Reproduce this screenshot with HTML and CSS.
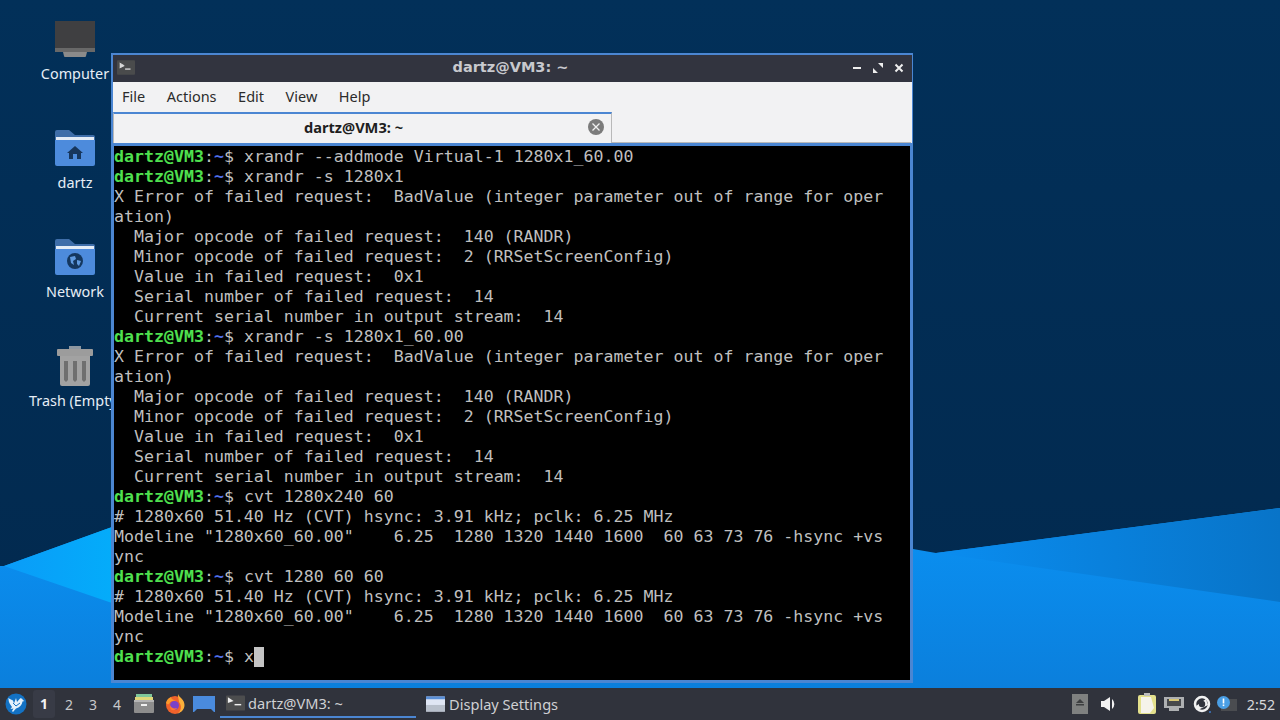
FILE: index.html
```html
<!DOCTYPE html>
<html lang="en">
<head>
<meta charset="utf-8">
<title>dartz@VM3: ~</title>
<link rel="stylesheet" href="styles.css">
</head>
<body>
<main class="desktop">
  <svg class="wallpaper" viewBox="0 0 1280 688" preserveAspectRatio="none" aria-hidden="true">
    <defs>
      <linearGradient id="sky" x1="0" y1="0" x2="0" y2="1">
        <stop offset="0" stop-color="#023059"/>
        <stop offset="1" stop-color="#02294e"/>
      </linearGradient>
      <linearGradient id="lower" x1="0" y1="0" x2="0" y2="1">
        <stop offset="0" stop-color="#0a92f4"/>
        <stop offset="1" stop-color="#0b7fdc"/>
      </linearGradient>
      <linearGradient id="rightPanel" x1="0" y1="0" x2="1" y2="0">
        <stop offset="0" stop-color="#0a8df0"/>
        <stop offset="1" stop-color="#0874c8"/>
      </linearGradient>
      <linearGradient id="leftPanel" x1="0" y1="0" x2="1" y2="0">
        <stop offset="0" stop-color="#0a9cf8"/>
        <stop offset="1" stop-color="#04acfa"/>
      </linearGradient>
    </defs>
    <rect width="1280" height="688" fill="url(#sky)"/>
    <polygon points="0,688 0,566 4,566 112,527 913,549 936,553 1280,508 1280,688" fill="url(#lower)"/>
    <polygon points="936,553 1280,508 1280,602" fill="url(#rightPanel)"/>
    <polygon points="4,566 112,527 112,603" fill="url(#leftPanel)"/>
  </svg>

  <nav class="icons">
    <a class="desk-icon">
      <svg class="desk-glyph" viewBox="0 0 40 40">
        <rect x="0" y="2" width="40" height="27" fill="#3f3f41"/>
        <rect x="0" y="29" width="40" height="4" fill="#686868"/>
        <path d="M8 33h24l-1 4a1 1 0 0 1-1 1H10a1 1 0 0 1-1-1z" fill="#8a8a8a"/>
      </svg>
      <span>Computer</span>
    </a>
    <a class="desk-icon">
      <svg class="desk-glyph" viewBox="0 0 40 40">
        <path d="M0 4a2 2 0 0 1 2-2h12l6 5h18a2 2 0 0 1 2 2v6H0z" fill="#3f6ea9"/>
        <rect x="1" y="9" width="38" height="3" fill="#e4ecf6"/>
        <path d="M0 12h40v24a2 2 0 0 1-2 2H2a2 2 0 0 1-2-2z" fill="#4d8bdc"/>
        <path d="M20 18l8 7h-2v6h-4v-5h-4v5h-4v-6h-2z" fill="#17365c"/>
      </svg>
      <span>dartz</span>
    </a>
    <a class="desk-icon">
      <svg class="desk-glyph" viewBox="0 0 40 40">
        <path d="M0 4a2 2 0 0 1 2-2h12l6 5h18a2 2 0 0 1 2 2v6H0z" fill="#3f6ea9"/>
        <rect x="1" y="9" width="38" height="3" fill="#e4ecf6"/>
        <path d="M0 12h40v24a2 2 0 0 1-2 2H2a2 2 0 0 1-2-2z" fill="#4d8bdc"/>
        <circle cx="20" cy="24" r="8" fill="#14375f"/>
        <path d="M15 20l5-1 1 3-3 2 1 4-3-2zM22 23l4 1-2 5-2-2z" fill="#5f9ae0"/>
      </svg>
      <span>Network</span>
    </a>
    <a class="desk-icon">
      <svg class="desk-glyph" viewBox="0 0 40 40">
        <rect x="14" y="0" width="12" height="3" fill="#8d97a1"/>
        <rect x="2" y="3" width="36" height="7" rx="1" fill="#9c9c9c"/>
        <path d="M5 10h30v28a2 2 0 0 1-2 2H7a2 2 0 0 1-2-2z" fill="#a2a2a2"/>
        <path d="M9 15h4v19l-2 2-2-2zM18 15h4v19l-2 2-2-2zM27 15h4v19l-2 2-2-2z" fill="#6f6f6f"/>
      </svg>
      <span>Trash (Empty)</span>
    </a>
  </nav>

  <section class="window">
    <header class="titlebar">
      <svg class="term-icon" viewBox="0 0 20 16">
        <rect width="20" height="16" rx="1" fill="#4a4b4c"/>
        <path d="M3 3l5 3-5 2.500" fill="#d8d8d8" stroke="#d8d8d8"/>
        <rect x="9" y="9" width="6" height="1.500" fill="#d8d8d8"/>
      </svg>
      <h1 class="title">dartz@VM3: ~</h1>
      <div class="controls">
        <svg viewBox="0 0 10 10"><rect x="1" y="4" width="8" height="2" fill="#eee"/></svg>
        <svg viewBox="0 0 10 10"><path d="M5 0h5v5zM0 5l5 5H0z" fill="#eee"/></svg>
        <svg viewBox="0 0 10 10"><path d="M1.500 1.500l7 7M8.500 1.500l-7 7" stroke="#eee" stroke-width="2"/></svg>
      </div>
    </header>
    <nav class="menubar">
      <span>File</span><span>Actions</span><span>Edit</span><span>View</span><span>Help</span>
    </nav>
    <div class="tabbar">
      <div class="tab">
        <span class="tab-label">dartz@VM3: ~</span>
        <svg class="tab-close" viewBox="0 0 16 16">
          <circle cx="8" cy="8" r="8" fill="#7b7b7b"/>
          <path d="M4.500 4.500l7 7M11.500 4.500l-7 7" stroke="#f0f0f0" stroke-width="1.300"/>
        </svg>
      </div>
    </div>
    <div class="terminal">
<div class="line"><b class="u">dartz@VM3</b>:<b class="h">~</b>$ xrandr --addmode Virtual-1 1280x1_60.00</div>
<div class="line"><b class="u">dartz@VM3</b>:<b class="h">~</b>$ xrandr -s 1280x1</div>
<div class="line">X Error of failed request:  BadValue (integer parameter out of range for oper</div>
<div class="line">ation)</div>
<div class="line">  Major opcode of failed request:  140 (RANDR)</div>
<div class="line">  Minor opcode of failed request:  2 (RRSetScreenConfig)</div>
<div class="line">  Value in failed request:  0x1</div>
<div class="line">  Serial number of failed request:  14</div>
<div class="line">  Current serial number in output stream:  14</div>
<div class="line"><b class="u">dartz@VM3</b>:<b class="h">~</b>$ xrandr -s 1280x1_60.00</div>
<div class="line">X Error of failed request:  BadValue (integer parameter out of range for oper</div>
<div class="line">ation)</div>
<div class="line">  Major opcode of failed request:  140 (RANDR)</div>
<div class="line">  Minor opcode of failed request:  2 (RRSetScreenConfig)</div>
<div class="line">  Value in failed request:  0x1</div>
<div class="line">  Serial number of failed request:  14</div>
<div class="line">  Current serial number in output stream:  14</div>
<div class="line"><b class="u">dartz@VM3</b>:<b class="h">~</b>$ cvt 1280x240 60</div>
<div class="line"># 1280x60 51.40 Hz (CVT) hsync: 3.91 kHz; pclk: 6.25 MHz</div>
<div class="line">Modeline "1280x60_60.00"    6.25  1280 1320 1440 1600  60 63 73 76 -hsync +vs</div>
<div class="line">ync</div>
<div class="line"><b class="u">dartz@VM3</b>:<b class="h">~</b>$ cvt 1280 60 60</div>
<div class="line"># 1280x60 51.40 Hz (CVT) hsync: 3.91 kHz; pclk: 6.25 MHz</div>
<div class="line">Modeline "1280x60_60.00"    6.25  1280 1320 1440 1600  60 63 73 76 -hsync +vs</div>
<div class="line">ync</div>
<div class="line"><b class="u">dartz@VM3</b>:<b class="h">~</b>$ x<i class="cursor"></i></div>
    </div>
  </section>
</main>

<footer class="taskbar">
  <svg class="start" viewBox="0 0 22 22">
    <circle cx="11" cy="11" r="10.500" fill="#1372c4"/>
    <path d="M3 5l5 2.500 1 3 2-5.500 1 4 3-3.500c1.500-.5 2.500.5 2.800 1.500l1.700 1-2 .5c-.5 3.500-3 6-6.500 7l-3 3.500-1-1 1.500-2.500-3 .5 1.500-2c-2-2.500-3.500-5-3.500-8z" fill="#e4f1fb"/>
    <path d="M8 10l3 3 4-3" fill="none" stroke="#1372c4" stroke-width="1"/>
  </svg>
  <div class="pager">
    <span class="active">1</span><span>2</span><span>3</span><span>4</span>
  </div>
  <div class="launchers">
    <svg viewBox="0 0 20 20">
      <rect x="2" y="0" width="16" height="3" fill="#7fc79a"/>
      <rect x="1" y="3" width="18" height="3" fill="#e0d77a"/>
      <path d="M0 7h20v11a1 1 0 0 1-1 1H1a1 1 0 0 1-1-1z" fill="#8d8d8d"/>
      <rect x="0" y="6" width="20" height="2" fill="#b5b5b5"/>
      <rect x="7" y="10" width="6" height="2" fill="#f0f0f0"/>
    </svg>
    <svg viewBox="0 0 20 20">
      <circle cx="10" cy="11" r="9" fill="#f0622b"/>
      <path d="M13 0c.5 3 6.500 5 6.500 11 0 4-3 7.500-7 8.500 4-2.500 4.500-8 1.500-11.500 0-3-1.500-5-1-8z" fill="#fbb03b"/>
      <path d="M1 9c.5-3 2.500-5 5-6 0 2 2 3 5 3.500-4 0-6 1-7 3.500-1 .5-2 .5-3-1z" fill="#fa9a2c"/>
      <circle cx="9.500" cy="11.500" r="4.500" fill="#7a42c8"/>
      <path d="M5 11c1 3 4 4 7 3-1 2-4 3-6 1.500-1-1-1-3-1-4.500z" fill="#ff7a2e"/>
    </svg>
    <svg class="wide" viewBox="0 0 22 16">
      <path d="M0 0h22v16h-1l-3-3H4l-3 3H0z" fill="#4a8bdd"/>
    </svg>
  </div>
  <div class="task current">
    <svg viewBox="0 0 20 16">
      <rect width="20" height="16" rx="1" fill="#4c4d4e"/>
      <path d="M2 2l6 4-6 2" fill="#eee"/>
      <rect x="9" y="9" width="7" height="1.500" fill="#eee"/>
    </svg>
    <span>dartz@VM3: ~</span>
  </div>
  <div class="task">
    <svg viewBox="0 0 20 16">
      <rect width="20" height="16" rx="1" fill="#dfe6f4"/>
      <rect width="20" height="3" fill="#5a8fd6"/>
      <rect y="9" width="20" height="7" fill="#b8c0cc"/>
    </svg>
    <span>Display Settings</span>
  </div>
  <div class="tray">
    <svg class="t-eject" viewBox="0 0 16 20">
      <rect width="16" height="20" fill="#7f8180"/>
      <path d="M8 5l4 4H4z" fill="#3d3f40"/>
      <rect x="4" y="10" width="8" height="1.500" fill="#3d3f40"/>
    </svg>
    <svg class="t-vol" viewBox="0 0 18 18">
      <path d="M1 6h3l6-4v14l-6-4H1z" fill="#f2f2f2"/>
      <path d="M12 4a6.500 6.500 0 0 1 0 10z" fill="#f2f2f2"/>
    </svg>
    <svg class="t-note" viewBox="0 0 20 22">
      <rect x="1" y="2" width="18" height="19" rx="2" fill="#e3e08c"/>
      <rect x="7" y="0" width="6" height="3" fill="#bdbdbd"/>
      <path d="M4 4h10l3 11-4 5H4z" fill="#f5f3ea"/>
    </svg>
    <svg class="t-net" viewBox="0 0 20 16">
      <path d="M0 1h20v11h-5v3H5v-3H0z" fill="#aeb0b2"/>
      <rect x="3" y="3" width="14" height="7" fill="#47494c"/>
      <path d="M5 3h10v2H5z" fill="#d8c777"/>
    </svg>
    <svg class="t-sync" viewBox="0 0 18 18">
      <circle cx="9" cy="9" r="7" fill="none" stroke="#f2f2f2" stroke-width="2.500"/>
      <path d="M3 11l10-7 2 6-10 5z" fill="#f2f2f2"/>
      <circle cx="9" cy="9" r="3.200" fill="#30333c"/>
      <circle cx="17" cy="17" r="1" fill="#3d78c4"/>
    </svg>
    <svg class="t-bell" viewBox="0 0 20 16">
      <rect x="4" y="3" width="16" height="12" fill="#4a4c50"/>
      <circle cx="6.500" cy="6.500" r="6.500" fill="#4a9fe6"/>
      <rect x="5.700" y="2.500" width="1.600" height="5" fill="#fff"/>
      <rect x="5.700" y="8.500" width="1.600" height="1.600" fill="#fff"/>
    </svg>
    <time>2:52</time>
  </div>
</footer>
</body>
</html>
```
FILE: styles.css
```css
* { box-sizing: border-box; }
html, body { margin: 0; padding: 0; height: 100%; }
body {
  width: 1280px;
  height: 720px;
  display: flex;
  flex-direction: column;
  overflow: hidden;
  font-family: "Noto Sans", "Open Sans", sans-serif;
}
.desktop { position: relative; height: 688px; overflow: hidden; }
.wallpaper { position: absolute; inset: 0; width: 100%; height: 100%; display: block; }

.icons {
  position: absolute;
  left: 0;
  top: 19px;
  width: 150px;
  display: flex;
  flex-direction: column;
  gap: 45px;
}
.desk-icon {
  display: flex;
  flex-direction: column;
  align-items: center;
  width: 150px;
  color: #e6eef6;
  font-size: 14.400px;
  line-height: 19px;
  gap: 5px;
  white-space: nowrap;
  overflow: hidden;
}
.desk-glyph { width: 40px; height: 40px; display: block; flex: none; }

.window {
  position: absolute;
  left: 111px;
  top: 53px;
  width: 802px;
  height: 630px;
  display: flex;
  flex-direction: column;
  background: #f2f2f3;
  border: 2px solid #4b86d2;
  border-bottom: 0;
  border-right-width: 1px;
}
.titlebar {
  height: 27px;
  flex: none;
  background: #32343f;
  display: grid;
  grid-template-columns: 1fr auto 1fr;
  align-items: center;
  padding: 0 8px 2px 4px;
}
.term-icon { width: 18px; height: 15px; display: block; }
.title {
  margin: 0;
  padding-bottom: 2px;
  text-align: center;
  color: #c8c9ce;
  font-family: "DejaVu Sans", "Noto Sans", sans-serif;
  font-size: 14.500px;
  font-weight: 700;
}
.controls { display: flex; gap: 11px; align-items: center; justify-self: end; }
.controls svg { width: 10px; height: 10px; display: block; }

.menubar {
  height: 30px;
  flex: none;
  display: flex;
  align-items: center;
  gap: 21.500px;
  padding: 0 0 2px 9px;
  font-size: 14.500px;
  color: #2b2b2b;
}
.tabbar {
  height: 31px;
  flex: none;
  border-bottom: 1px solid #b9b9b9;
  margin-right: 1px;
}
.tab {
  position: relative;
  width: 499px;
  height: 31px;
  background: #f2f2f3;
  border: 1px solid #b9b9b9;
  border-top: 2px solid #4b86d2;
  border-bottom: 0;
  display: flex;
  align-items: center;
  justify-content: center;
}
.tab-label { font-size: 14.600px; font-weight: 700; color: #1e1e1e; margin: 0 18px 4px 0; }
.tab-close { position: absolute; right: 7px; top: 5px; width: 16px; height: 16px; }

.terminal {
  flex: 1;
  background: #000;
  border: solid #4b86d2;
  border-width: 3px 2px 3px 1px;
  padding-top: 1px;
  font-family: "DejaVu Sans Mono", "Liberation Mono", monospace;
  font-size: 16.600px;
  line-height: 20px;
  color: #bfbfbf;
  overflow: hidden;
}
.line { height: 20px; white-space: pre; }
.u { color: #4fe04f; font-weight: 700; }
.h { color: #4f6fe8; font-weight: 700; }
.cursor { display: inline-block; width: 10px; height: 20px; background: #c4c4c4; vertical-align: top; }

.taskbar {
  height: 32px;
  flex: none;
  background: #30333c;
  display: flex;
  align-items: center;
  color: #d8d8da;
  font-size: 14px;
  padding-left: 5px;
  position: relative;
}
.start { width: 22px; height: 22px; flex: none; margin-right: 6px; }
.pager { display: flex; height: 32px; align-items: center; font-size: 14px; color: #c8c9cc; }
.pager span { width: 24px; text-align: center; }
.pager .active { background: #383b46; color: #f2f2f2; height: 28px; line-height: 28px; font-weight: 700; border-radius: 3px; width: 22px; margin-right: 2px; }
.launchers { display: flex; align-items: center; gap: 11px; margin-left: 5px; }
.launchers svg { width: 20px; height: 20px; display: block; }
.launchers .wide { width: 22px; height: 16px; margin-left: -3px; }
.task {
  display: flex;
  align-items: center;
  gap: 4px;
  height: 32px;
  padding-left: 6px;
  width: 196px;
  font-size: 14.600px;
  color: #cfd0d3;
}
.task svg { width: 19px; height: 16px; flex: none; }
.current { margin-left: 5px; height: 30px; align-self: flex-start; padding-top: 2px; border-bottom: 2px solid #4b86d2; margin-right: 4px; gap: 3px; }
.tray { margin-left: auto; display: flex; align-items: center; height: 32px; padding-right: 5px; }
.tray svg { display: block; }
.t-eject { width: 16px; height: 20px; margin-right: 12px; }
.t-vol { width: 18px; height: 18px; margin-right: 19px; }
.t-note { width: 20px; height: 22px; margin-right: 7px; }
.t-net { width: 20px; height: 16px; margin-right: 9px; }
.t-sync { width: 18px; height: 18px; margin-right: 6px; }
.t-bell { width: 20px; height: 16px; margin-right: 10px; }
time { font-size: 14.200px; color: #d8d8da; }
```
